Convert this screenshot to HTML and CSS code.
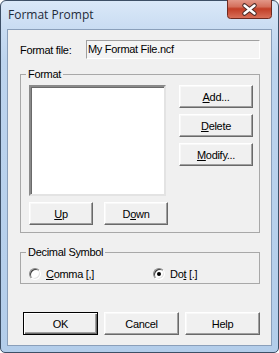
FILE: index.html
```html
<!DOCTYPE html>
<html lang="en">
<head>
    <meta charset="UTF-8">
    <title>Format Prompt</title>
    <link rel="stylesheet" href="styles.css">
</head>
<body>
    <div class="window">
        <div class="titlebar">
            <span class="title">Format Prompt</span>
            <span class="close">
                <svg width="45" height="19" viewBox="0 0 45 19">
                    <defs>
                        <linearGradient id="closeBg" x1="0" y1="0" x2="0" y2="1">
                            <stop offset="0" stop-color="#e9a99b"/>
                            <stop offset="0.45" stop-color="#d4705c"/>
                            <stop offset="0.55" stop-color="#c23e26"/>
                            <stop offset="1" stop-color="#d9725c"/>
                        </linearGradient>
                    </defs>
                    <rect x="0.5" y="-3" width="44" height="21.5" rx="3" fill="url(#closeBg)" stroke="#6e2a20"/>
                    <path d="M17.5 5.5 L27.5 13.5 M27.5 5.5 L17.5 13.5" stroke="#4a2a26" stroke-width="4.5" stroke-linecap="round"/>
                    <path d="M17.5 5.5 L27.5 13.5 M27.5 5.5 L17.5 13.5" stroke="#ffffff" stroke-width="2.5" stroke-linecap="round"/>
                </svg>
            </span>
        </div>
        <div class="client">
            <div class="file-row">
                <span class="label">Format file:</span>
                <div class="field">My Format File.ncf</div>
            </div>

            <fieldset class="group format-group">
                <legend>Format</legend>
                <div class="format-body">
                    <div class="list-col">
                        <div class="listbox"></div>
                        <div class="move-row">
                            <button class="btn move"><u>U</u>p</button>
                            <button class="btn move">D<u>o</u>wn</button>
                        </div>
                    </div>
                    <div class="side-col">
                        <button class="btn side"><u>A</u>dd...</button>
                        <button class="btn side"><u>D</u>elete</button>
                        <button class="btn side"><u>M</u>odify...</button>
                    </div>
                </div>
            </fieldset>

            <fieldset class="group decimal-group">
                <legend>Decimal Symbol</legend>
                <div class="radio-row">
                    <label class="radio-item comma"><span class="radio"></span><span><u>C</u>omma [,]</span></label>
                    <label class="radio-item"><span class="radio checked"></span><span>Do<u>t</u> [.]</span></label>
                </div>
            </fieldset>

            <div class="footer">
                <button class="btn foot default">OK</button>
                <button class="btn foot">Cancel</button>
                <button class="btn foot">Help</button>
            </div>
        </div>
    </div>
</body>
</html>
```

FILE: styles.css
```css
* {
    margin: 0;
    padding: 0;
    box-sizing: border-box;
}
body {
    background: #ffffff;
    font-family: 'Liberation Sans', Arial, sans-serif;
    font-size: 11px;
    letter-spacing: -0.3px;
    color: #000000;
}
.window {
    width: 279px;
    height: 353px;
    border: 1px solid #3d4f66;
    border-radius: 6px 6px 5px 5px;
    background: linear-gradient(to bottom, #dae8f8, #c9dcf2 28px, #bdd4ee 60px, #b3cdea);
    padding: 0 6px 6px;
    display: flex;
    flex-direction: column;
}
.titlebar {
    height: 28px;
    display: flex;
    align-items: flex-start;
}
.title {
    font-family: 'Open Sans', 'Noto Sans', sans-serif;
    font-size: 12px;
    letter-spacing: 0;
    line-height: 16px;
    margin-top: 6px;
    margin-left: 1px;
    color: #1e2a3a;
}
.close {
    margin-left: auto;
    margin-top: -1px;
    height: 19px;
    display: block;
}
.close svg {
    display: block;
}
.client {
    flex: 1;
    border: 1px solid #8a9fba;
    background: #f0f0f0;
    padding: 10px 11px 0 12px;
    display: flex;
    flex-direction: column;
}
.file-row {
    display: flex;
    align-items: center;
    height: 19px;
}
.label {
    width: 66px;
}
.field {
    width: 174px;
    height: 19px;
    line-height: 17px;
    padding-left: 1px;
    border: 1px solid;
    border-color: #a0a0a0 #ffffff #ffffff #a0a0a0;
    background: #f4f4f4;
}
.group {
    border: 1px solid #a8a8a8;
    border-radius: 0;
    min-width: 0;
}
.group legend {
    font-size: 11px;
    line-height: 14px;
    padding: 0 2px;
    margin-left: -3px;
}
.format-group {
    margin-top: 8px;
    padding: 4px 6px 7px 8px;
}
.format-body {
    display: flex;
    gap: 11px;
}
.list-col {
    width: 139px;
    display: flex;
    flex-direction: column;
    gap: 6px;
}
.listbox {
    width: 137px;
    height: 111px;
    background: #ffffff;
    border: 2px solid;
    border-color: #8a8a8a #e3e3e3 #e3e3e3 #8a8a8a;
    box-shadow: inset 1px 1px 0 #6a6a6a;
}
.move-row {
    display: flex;
    gap: 11px;
}
.side-col {
    display: flex;
    flex-direction: column;
    gap: 6px;
}
.btn {
    font-family: 'Liberation Sans', Arial, sans-serif;
    font-size: 11px;
    letter-spacing: -0.3px;
    color: #000000;
    background: #f0f0f0;
    border: 1px solid;
    border-color: #ffffff #696969 #696969 #ffffff;
    box-shadow: inset -1px -1px 0 #a0a0a0, inset 1px 1px 0 #f8f8f8;
    height: 23px;
    cursor: pointer;
}
.btn.move {
    width: 64px;
}
.btn.side {
    width: 74px;
}
.btn.foot {
    width: 75px;
}
.btn.default {
    border-color: #000000;
    box-shadow: inset 1px 1px 0 #ffffff, inset -1px -1px 0 #696969, inset -2px -2px 0 #a0a0a0;
}
.decimal-group {
    margin-top: 12px;
    padding: 8px 8px 2px 8px;
}
.radio-row {
    display: flex;
    height: 14px;
    align-items: center;
}
.radio-item {
    display: flex;
    align-items: center;
    gap: 5px;
}
.radio-item.comma {
    width: 124px;
}
.radio {
    width: 12px;
    height: 12px;
    border-radius: 50%;
    border: 1px solid;
    border-color: #8a8a8a #ffffff #ffffff #8a8a8a;
    background: #ffffff;
    box-shadow: inset 1px 1px 0 #404040, inset -1px -1px 0 #e3e3e3;
    display: flex;
    align-items: center;
    justify-content: center;
}
.radio.checked::after {
    content: '';
    width: 4px;
    height: 4px;
    border-radius: 50%;
    background: #000000;
}
.footer {
    display: flex;
    gap: 6px;
    margin-top: 28px;
    padding-left: 3px;
}
```
